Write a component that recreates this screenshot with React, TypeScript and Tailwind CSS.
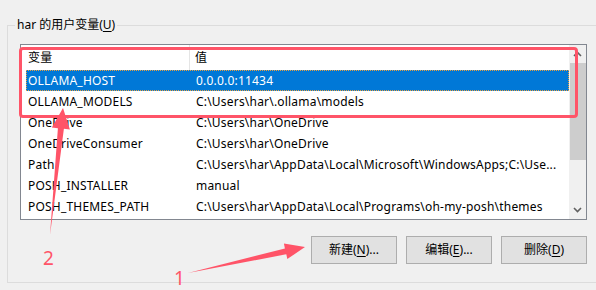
import { JSX } from "react";

type Row = { name: string; value: string; selected?: boolean };

const rows: Row[] = [
  { name: "OLLAMA_HOST", value: "0.0.0.0:11434", selected: true },
  { name: "OLLAMA_MODELS", value: "C:\\Users\\har\\.ollama\\models" },
  { name: "OneDrive", value: "C:\\Users\\har\\OneDrive" },
  { name: "OneDriveConsumer", value: "C:\\Users\\har\\OneDrive" },
  { name: "Path", value: "C:\\Users\\har\\AppData\\Local\\Microsoft\\WindowsApps;C:\\Use..." },
  { name: "POSH_INSTALLER", value: "manual" },
  { name: "POSH_THEMES_PATH", value: "C:\\Users\\har\\AppData\\Local\\Programs\\oh-my-posh\\themes" },
];

function WinButton({ label, hotkey, dots = true }: { label: string; hotkey: string; dots?: boolean }) {
  return (
    <button className="w-[86px] h-[28px] bg-[#e1e1e1] border border-[#adadad] text-[12px] text-black flex items-center justify-center">
      {label}(<span className="underline underline-offset-2">{hotkey}</span>){dots ? "..." : ""}
    </button>
  );
}

function Arrows(): JSX.Element {
  const red = "#ff5468";
  return (
    <svg className="absolute inset-0 pointer-events-none" width="596" height="290" viewBox="0 0 596 290">
      {/* arrow 1 */}
      <polygon
        fill={red}
        points="188,273 286.3,254.2 287.3,259.1 305,247 283.9,243.5 284.9,248.4"
      />
      {/* arrow 2 */}
      <polygon
        fill={red}
        points="50,235 63.9,128.8 69.9,129.4 63,108 51.9,127.6 57.9,128.2"
      />
    </svg>
  );
}

export default function App() {
  return (
    <div
      className="relative w-[596px] h-[290px] overflow-hidden bg-[#f0f0f0] text-[12px] text-black"
      style={{ fontFamily: '"Noto Sans", "Noto Sans CJK SC", sans-serif' }}
    >
      <div className="relative ml-[7px] mt-[25px] w-[600px] h-[258px] border border-[#dcdcdc]">
        <div className="absolute left-[7px] top-[-9px] px-[2px] bg-[#f0f0f0] leading-[16px]">
          har 的用户变量(<span className="underline underline-offset-2">U</span>)
        </div>

        <div className="flex flex-col pl-[12px] pt-[18px]">
          {/* list view */}
          <div className="w-[567px] h-[176px] border border-[#828790] bg-white flex tracking-[0.2px]">
            <div className="flex-1 flex flex-col pl-[5px]">
              <div className="h-[25px] flex items-center">
                <div className="w-[164px] h-full flex items-center pl-[2px] border-r border-[#e5e5e5]">变量</div>
                <div className="pl-[5px]">值</div>
              </div>
              {rows.map((r) => (
                <div
                  key={r.name}
                  className={
                    r.selected
                      ? "h-[21px] flex items-center bg-[#0078d7] text-white outline-1 outline-dotted outline-[#e8a040] -outline-offset-1"
                      : "h-[21px] flex items-center"
                  }
                >
                  <div className="w-[164px] pl-[2px] whitespace-nowrap">{r.name}</div>
                  <div className="pl-[6px] whitespace-nowrap">{r.value}</div>
                </div>
              ))}
            </div>
            {/* scrollbar */}
            <div className="w-[17px] h-full bg-[#f0f0f0] flex flex-col items-center">
              <div className="h-[18px] flex items-center justify-center">
                <svg width="9" height="6" viewBox="0 0 9 6"><path d="M1 5 L4.5 1.5 L8 5" fill="none" stroke="#606060" strokeWidth="1.6" /></svg>
              </div>
              <div className="w-[16px] h-[97px] bg-[#cdcdcd]" />
              <div className="flex-1" />
              <div className="h-[18px] flex items-center justify-center">
                <svg width="9" height="6" viewBox="0 0 9 6"><path d="M1 1 L4.5 4.5 L8 1" fill="none" stroke="#606060" strokeWidth="1.6" /></svg>
              </div>
            </div>
          </div>

          {/* buttons */}
          <div className="flex gap-[9px] ml-[291px] mt-[16px]">
            <WinButton label="新建" hotkey="N" />
            <WinButton label="编辑" hotkey="E" />
            <WinButton label="删除" hotkey="D" dots={false} />
          </div>
        </div>
      </div>

      {/* annotations */}
      <div className="absolute left-[19px] top-[47px] w-[559px] h-[71px] border-[3px] border-[#ff5468] rounded-[4px]" />
      <Arrows />
      <div className="absolute left-[43px] top-[246px] text-[19px] leading-[24px] text-[#ff5468]">2</div>
      <div className="absolute left-[174px] top-[266px] text-[19px] leading-[24px] text-[#ff5468]">1</div>
    </div>
  );
}
